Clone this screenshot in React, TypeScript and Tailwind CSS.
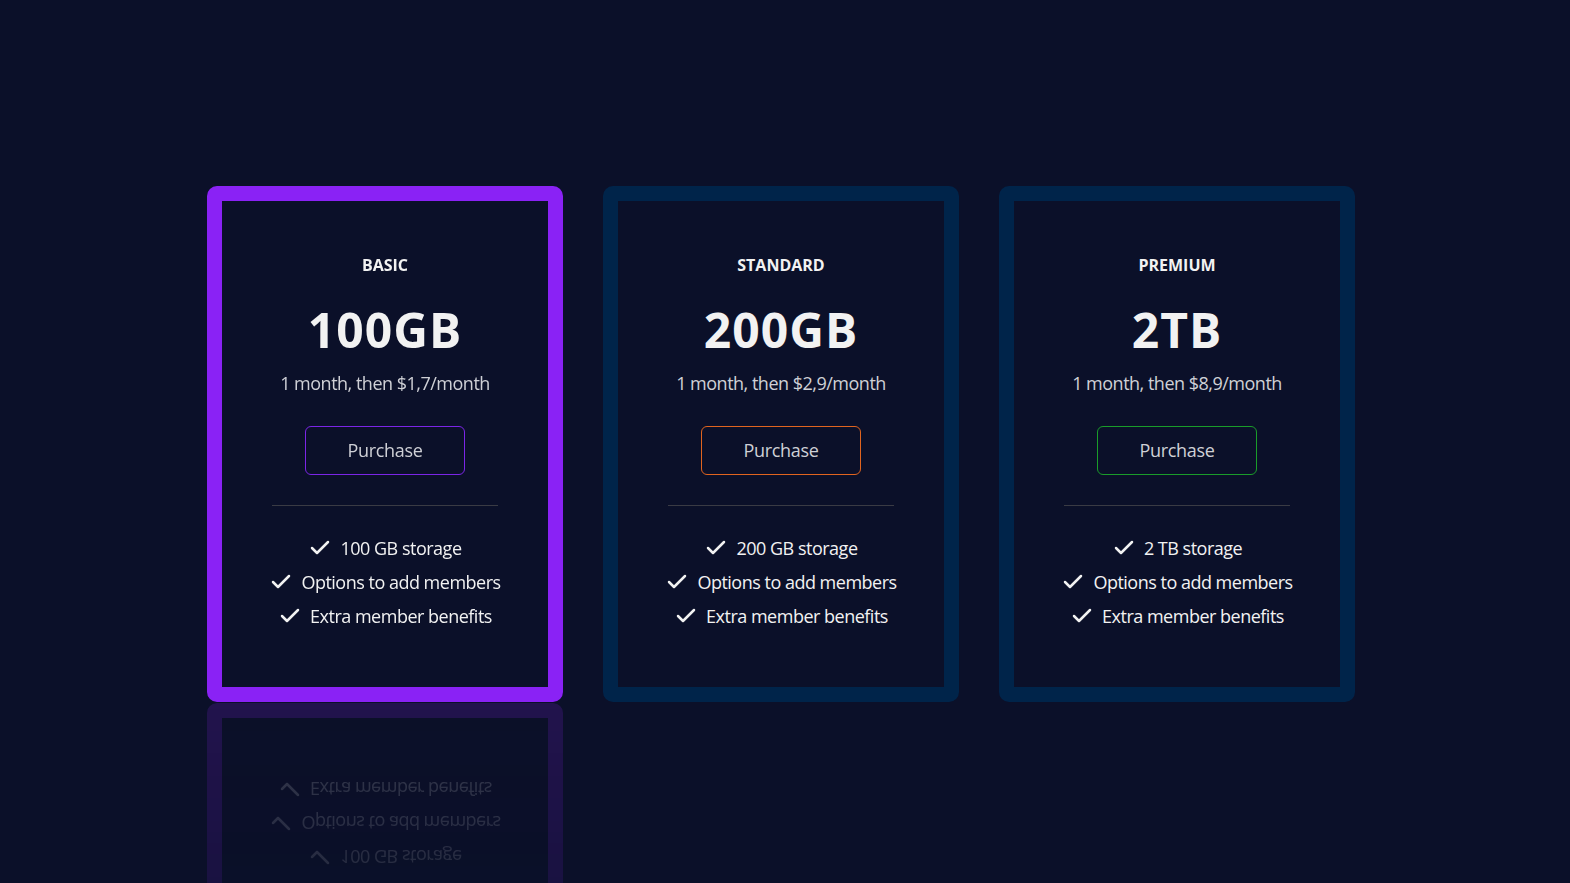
import { Check } from "lucide-react";

interface Plan {
  name: string;
  size: string;
  price: string;
  storage: string;
  cardBorder: string;
  buttonBorder: string;
  reflect?: boolean;
}

const plans: Plan[] = [
  {
    name: "BASIC",
    size: "100GB",
    price: "1 month, then $1,7/month",
    storage: "100 GB storage",
    cardBorder: "border-[#8a22f5]",
    buttonBorder: "border-[#7b25e6]",
    reflect: true,
  },
  {
    name: "STANDARD",
    size: "200GB",
    price: "1 month, then $2,9/month",
    storage: "200 GB storage",
    cardBorder: "border-[#00244a]",
    buttonBorder: "border-[#e0641f]",
  },
  {
    name: "PREMIUM",
    size: "2TB",
    price: "1 month, then $8,9/month",
    storage: "2 TB storage",
    cardBorder: "border-[#00244a]",
    buttonBorder: "border-[#1a9c2a]",
  },
];

function PlanCard({ plan }: { plan: Plan }) {
  const features = [plan.storage, "Options to add members", "Extra member benefits"];
  return (
    <div
      className={`w-[356px] rounded-[10px] border-[15px] ${plan.cardBorder} bg-[#0b1029] pt-[52px] pb-[54px] flex flex-col items-center text-center ${
        plan.reflect
          ? "[-webkit-box-reflect:below_1px_linear-gradient(transparent,rgba(0,0,0,0.18))]"
          : ""
      }`}
    >
      <h3 className="text-[16px] leading-6 font-bold text-[#f2f2f2]">{plan.name}</h3>
      <p className="mt-[29px] text-[48px] leading-[48px] font-bold tracking-[1px] text-[#f2f2f2]">
        {plan.size}
      </p>
      <p className="mt-[15px] text-[18px] leading-7 tracking-[-0.5px] text-[#cfd0d6]">
        {plan.price}
      </p>
      <button
        className={`mt-[29px] w-[160px] h-[49px] rounded-md border ${plan.buttonBorder} text-[18px] tracking-[-0.3px] text-[#cfd0d6] bg-transparent`}
      >
        Purchase
      </button>
      <div className="mt-[30px] w-[226px] h-px bg-[#3a3b44]" />
      <ul className="mt-[25px] flex flex-col items-center">
        {features.map((f) => (
          <li
            key={f}
            className="flex items-center gap-2 text-[18px] leading-[34px] tracking-[-0.5px] text-[#f2f2f2]"
          >
            <Check size={24} strokeWidth={2.5} className="shrink-0" />
            <span>{f}</span>
          </li>
        ))}
      </ul>
    </div>
  );
}

export default function App() {
  return (
    <div
      className="min-h-screen h-[883px] overflow-hidden bg-[#0b1029] flex justify-center items-start pt-[186px] pr-2"
      style={{ fontFamily: '"Open Sans", "Noto Sans", Arial, sans-serif' }}
    >
      <div className="flex gap-10">
        {plans.map((p) => (
          <PlanCard key={p.name} plan={p} />
        ))}
      </div>
    </div>
  );
}
